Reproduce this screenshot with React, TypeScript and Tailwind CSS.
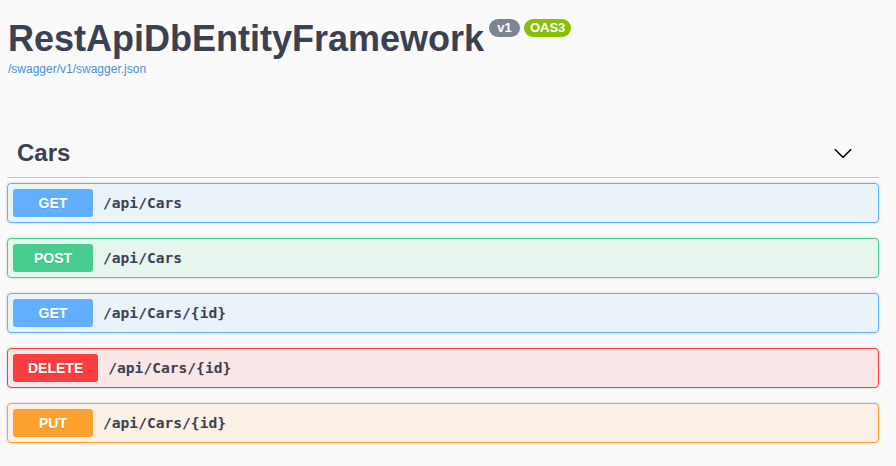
import React from "react";

type Op = { method: string; path: string; badge: string; border: string; bg: string };

const ops: Op[] = [
  { method: "GET", path: "/api/Cars", badge: "bg-[#61affe]", border: "border-[#61affe]", bg: "bg-[rgba(97,175,254,0.1)]" },
  { method: "POST", path: "/api/Cars", badge: "bg-[#49cc90]", border: "border-[#49cc90]", bg: "bg-[rgba(73,204,144,0.1)]" },
  { method: "GET", path: "/api/Cars/{id}", badge: "bg-[#61affe]", border: "border-[#61affe]", bg: "bg-[rgba(97,175,254,0.1)]" },
  { method: "DELETE", path: "/api/Cars/{id}", badge: "bg-[#f93e3e]", border: "border-[#f93e3e]", bg: "bg-[rgba(249,62,62,0.1)]" },
  { method: "PUT", path: "/api/Cars/{id}", badge: "bg-[#fca130]", border: "border-[#fca130]", bg: "bg-[rgba(252,161,48,0.1)]" },
];

export default function App() {
  return (
    <div className="min-h-[466px] w-[896px] bg-[#fafafa] pl-[7px] pr-[17px] pt-[18px] font-['Liberation_Sans',Arial,sans-serif] text-[#3b4151]">
      <div className="flex items-start">
        <h2 className="text-[36px] font-bold leading-[41px] text-[#3b4151] pl-px">RestApiDbEntityFramework</h2>
        <div className="ml-[5px] mt-px flex gap-[4px]">
          <span className="flex h-[18px] w-[31px] items-center justify-center rounded-full bg-[#7d8492] text-[13px] font-bold text-white">v1</span>
          <span className="flex h-[18px] w-[47px] items-center justify-center rounded-full bg-[#89bf04] text-[13px] font-bold text-white">OAS3</span>
        </div>
      </div>
      <a className="mt-[2px] block pl-px text-[12px] leading-[16px] text-[#4990e2]" href="#">/swagger/v1/swagger.json</a>

      <div className="mt-[52px]">
        <div className="mb-[5px] flex items-center border-b border-[rgba(59,65,81,0.3)] py-[10px] pl-[10px] pr-[26px]">
          <h3 className="flex-1 text-[24px] font-bold leading-[28px] text-[#3b4151]">Cars</h3>
          <svg width="20" height="20" viewBox="0 0 20 20" className="text-[#000]">
            <path
              fill="currentColor"
              d="M17.418 6.109c.272-.268.709-.268.979 0s.271.701 0 .969l-7.908 7.83c-.27.268-.707.268-.979 0l-7.908-7.83c-.27-.268-.27-.701 0-.969.271-.268.709-.268.979 0L10 13.25l7.418-7.141z"
            />
          </svg>
        </div>

        <div className="flex flex-col gap-[15px]">
          {ops.map((op, i) => (
            <div
              key={i}
              className={`flex items-center rounded-[4px] border p-[5px] shadow-[0_0_3px_rgba(0,0,0,0.19)] ${op.border} ${op.bg}`}
            >
              <span
                className={`flex h-[28px] min-w-[80px] items-center justify-center rounded-[3px] px-[15px] text-[14px] font-bold text-white [text-shadow:0_1px_0_rgba(0,0,0,0.1)] ${op.badge}`}
              >
                {op.method}
              </span>
              <span className="px-[10px] font-['DejaVu_Sans_Mono',monospace] text-[14.6px] font-bold text-[#3b4151]">
                {op.path}
              </span>
            </div>
          ))}
        </div>
      </div>
    </div>
  );
}
